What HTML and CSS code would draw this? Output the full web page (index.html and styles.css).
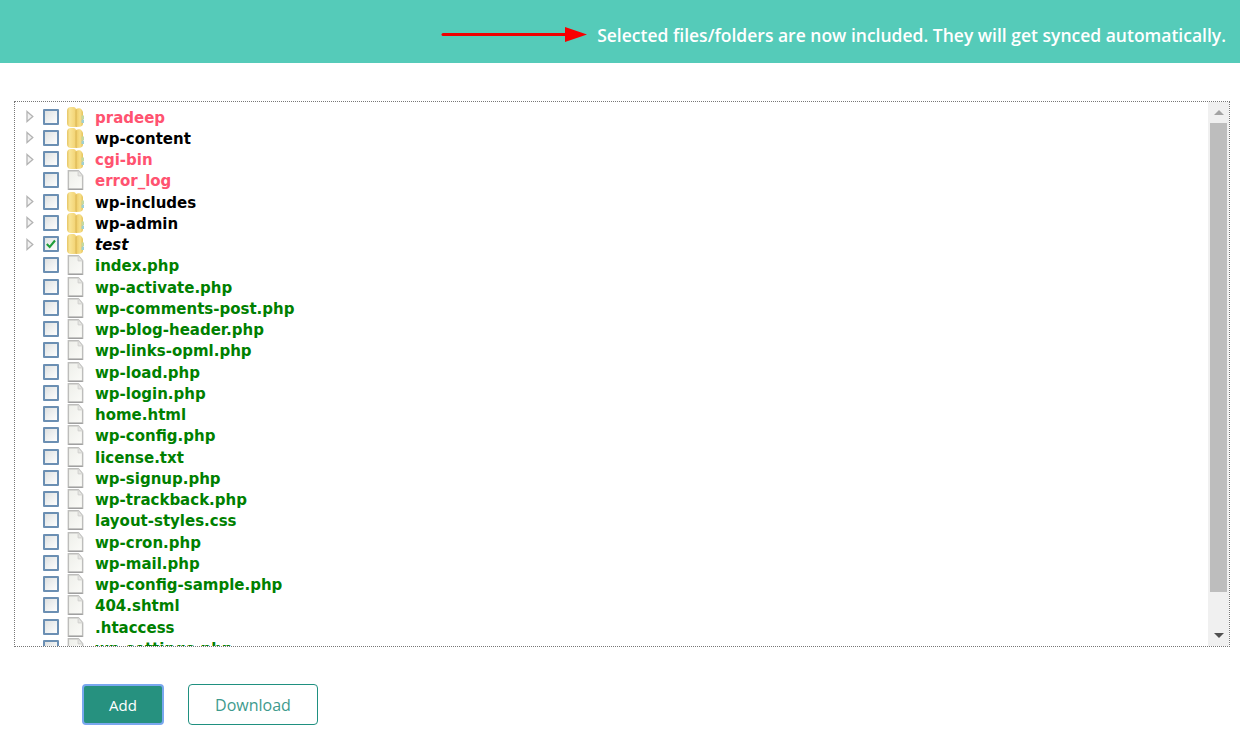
FILE: index.html
```html
<!DOCTYPE html>
<html lang="en">
<head>
<meta charset="utf-8">
<title>File tree</title>
<link rel="stylesheet" href="styles.css">
</head>
<body>
<svg class="defs" width="0" height="0" aria-hidden="true">
  <defs>
    <linearGradient id="foldL" x1="0" y1="0" x2="1" y2="0">
      <stop offset="0" stop-color="#e6c565"/>
      <stop offset="0.3" stop-color="#f9e596"/>
      <stop offset="1" stop-color="#f2d272"/>
    </linearGradient>
    <linearGradient id="foldR" x1="0" y1="0" x2="1" y2="0">
      <stop offset="0" stop-color="#eecb66"/>
      <stop offset="0.6" stop-color="#f7df88"/>
      <stop offset="1" stop-color="#e5c35a"/>
    </linearGradient>
    <linearGradient id="sheet" x1="0" y1="0" x2="1" y2="1">
      <stop offset="0" stop-color="#eeefea"/>
      <stop offset="1" stop-color="#fbfbf8"/>
    </linearGradient>
    <symbol id="folder" viewBox="0 0 17 20">
      <path d="M0 4C0 1.500 1.500 0 4 0h2.500C8 0 9 1 9 2.500V19c0 .7-.7 1-2 1H4c-2.500 0-4-1.500-4-4z" fill="url(#foldL)"/>
      <path d="M9 2c2-1 4.400-.8 5.500.4.900.9 1.500 2.100 1.500 3.200v11c0 1.800-1.200 3-2.800 3.200L9 20z" fill="url(#foldR)"/>
      <path d="M9 2.500V20" stroke="#d9b655" stroke-width="1"/>
      <rect x="14.500" y="8.500" width="2.500" height="3.500" fill="#c5d8a0"/>
      <rect x="14.500" y="12.500" width="2.500" height="3.500" fill="#9fd0d4"/>
    </symbol>
    <symbol id="file" viewBox="0 0 17 21">
      <path d="M1 .8H11.500L16 6v14.300H1z" fill="url(#sheet)" stroke="#bdbdbb" stroke-width="1.500"/>
      <path d="M11.200 .8V6.200H16" fill="#e6e6e3" stroke="#d0d0ce"/>
      <path d="M1 20.300h15" stroke="#a0a0a0" stroke-width="1.400"/>
    </symbol>
    <symbol id="arrow" viewBox="0 0 8 13">
      <path d="M1 1.500l5.800 5-5.800 5z" fill="#f2f2f2" stroke="#b3b3b3" stroke-width="1.300"/>
    </symbol>
  </defs>
</svg>

<header class="banner">
  <svg class="banner-arrow" width="148" height="18" viewBox="0 0 148 18" aria-hidden="true">
    <path d="M4 8.500H128" stroke="#f00000" stroke-width="3" stroke-linecap="round"/>
    <path d="M126 1L148 8.500L126 16z" fill="#f80000"/>
  </svg>
  <span class="banner-text">Selected files/folders are now included. They will get synced automatically.</span>
</header>

<main class="content">
  <section class="tree-box">
    <ul class="tree">
      <li class="row"><svg class="tog"><use href="#arrow"/></svg><span class="cb"></span><svg class="ic"><use href="#folder"/></svg><span class="name red">pradeep</span></li>
      <li class="row"><svg class="tog"><use href="#arrow"/></svg><span class="cb"></span><svg class="ic"><use href="#folder"/></svg><span class="name">wp-content</span></li>
      <li class="row"><svg class="tog"><use href="#arrow"/></svg><span class="cb"></span><svg class="ic"><use href="#folder"/></svg><span class="name red">cgi-bin</span></li>
      <li class="row"><span class="tog"></span><span class="cb"></span><svg class="ic"><use href="#file"/></svg><span class="name red">error_log</span></li>
      <li class="row"><svg class="tog"><use href="#arrow"/></svg><span class="cb"></span><svg class="ic"><use href="#folder"/></svg><span class="name">wp-includes</span></li>
      <li class="row"><svg class="tog"><use href="#arrow"/></svg><span class="cb"></span><svg class="ic"><use href="#folder"/></svg><span class="name">wp-admin</span></li>
      <li class="row"><svg class="tog"><use href="#arrow"/></svg><span class="cb"><svg width="12" height="12" viewBox="0 0 12 12"><path d="M1.800 6l2.900 2.900 5.300-6.400" fill="none" stroke="#1f9e3a" stroke-width="2.100"/></svg></span><svg class="ic"><use href="#folder"/></svg><span class="name sel">test</span></li>
      <li class="row"><span class="tog"></span><span class="cb"></span><svg class="ic"><use href="#file"/></svg><span class="name green">index.php</span></li>
      <li class="row"><span class="tog"></span><span class="cb"></span><svg class="ic"><use href="#file"/></svg><span class="name green">wp-activate.php</span></li>
      <li class="row"><span class="tog"></span><span class="cb"></span><svg class="ic"><use href="#file"/></svg><span class="name green">wp-comments-post.php</span></li>
      <li class="row"><span class="tog"></span><span class="cb"></span><svg class="ic"><use href="#file"/></svg><span class="name green">wp-blog-header.php</span></li>
      <li class="row"><span class="tog"></span><span class="cb"></span><svg class="ic"><use href="#file"/></svg><span class="name green">wp-links-opml.php</span></li>
      <li class="row"><span class="tog"></span><span class="cb"></span><svg class="ic"><use href="#file"/></svg><span class="name green">wp-load.php</span></li>
      <li class="row"><span class="tog"></span><span class="cb"></span><svg class="ic"><use href="#file"/></svg><span class="name green">wp-login.php</span></li>
      <li class="row"><span class="tog"></span><span class="cb"></span><svg class="ic"><use href="#file"/></svg><span class="name green">home.html</span></li>
      <li class="row"><span class="tog"></span><span class="cb"></span><svg class="ic"><use href="#file"/></svg><span class="name green">wp-config.php</span></li>
      <li class="row"><span class="tog"></span><span class="cb"></span><svg class="ic"><use href="#file"/></svg><span class="name green">license.txt</span></li>
      <li class="row"><span class="tog"></span><span class="cb"></span><svg class="ic"><use href="#file"/></svg><span class="name green">wp-signup.php</span></li>
      <li class="row"><span class="tog"></span><span class="cb"></span><svg class="ic"><use href="#file"/></svg><span class="name green">wp-trackback.php</span></li>
      <li class="row"><span class="tog"></span><span class="cb"></span><svg class="ic"><use href="#file"/></svg><span class="name green">layout-styles.css</span></li>
      <li class="row"><span class="tog"></span><span class="cb"></span><svg class="ic"><use href="#file"/></svg><span class="name green">wp-cron.php</span></li>
      <li class="row"><span class="tog"></span><span class="cb"></span><svg class="ic"><use href="#file"/></svg><span class="name green">wp-mail.php</span></li>
      <li class="row"><span class="tog"></span><span class="cb"></span><svg class="ic"><use href="#file"/></svg><span class="name green">wp-config-sample.php</span></li>
      <li class="row"><span class="tog"></span><span class="cb"></span><svg class="ic"><use href="#file"/></svg><span class="name green">404.shtml</span></li>
      <li class="row"><span class="tog"></span><span class="cb"></span><svg class="ic"><use href="#file"/></svg><span class="name green">.htaccess</span></li>
      <li class="row"><span class="tog"></span><span class="cb"></span><svg class="ic"><use href="#file"/></svg><span class="name green">wp-settings.php</span></li>
    </ul>
    <div class="scrollbar">
      <span class="sb-btn up"></span>
      <span class="sb-track"><span class="sb-thumb"></span></span>
      <span class="sb-btn down"></span>
    </div>
  </section>
  <div class="actions">
    <button class="btn primary" type="button">Add</button>
    <button class="btn ghost" type="button">Download</button>
  </div>
</main>
</body>
</html>
```

FILE: styles.css
```css
* { box-sizing: border-box; }
html, body { margin: 0; padding: 0; background: #fff; overflow: hidden; }
body { width: 1240px; height: 744px; font-family: "Open Sans", sans-serif; }
.defs { position: absolute; }

.banner {
  height: 63px;
  background: #55cbb9;
  display: flex;
  align-items: center;
  justify-content: flex-end;
  padding: 15px 14px 8px 0;
  gap: 10px;
}
.banner-text { color: #fff; font-size: 17.500px; font-weight: 600; white-space: nowrap; }

.content { padding: 38px 10px 0 14px; }

.tree-box {
  height: 546px;
  border: 1px dotted #777;
  display: flex;
  overflow: hidden;
}
.tree {
  list-style: none;
  margin: 0;
  padding: 4px 0 0 0;
  flex: 1;
  height: 100%;
  overflow: hidden;
}
.row { height: 21.250px; display: flex; align-items: center; }
.tog { width: 8px; height: 13px; margin-left: 11px; flex: none; }
.cb {
  width: 16px; height: 16px; margin-left: 9px; flex: none;
  border: 2px solid #6b8fb3;
  border-radius: 1px;
  background: linear-gradient(135deg, #dfe1e1 0%, #eef0f0 50%, #fdfdfd 100%);
  display: flex; align-items: center; justify-content: center;
}
.ic { width: 17px; height: 20px; margin-left: 8px; flex: none; }
.name {
  margin-left: 10px;
  padding: 2px 0 0 1px;
  font-family: "DejaVu Sans", sans-serif;
  font-weight: 700;
  font-size: 15px;
  color: #000;
  white-space: nowrap;
}
.red { color: #ff5370; }
.green { color: #008000; }
.sel { font-style: italic; }

.scrollbar { width: 21px; flex: none; background: #f0f0f0; display: flex; flex-direction: column; }
.sb-btn { height: 21px; flex: none; display: flex; align-items: center; justify-content: center; }
.down { height: 22px; }
.sb-btn::before { content: ""; width: 0; height: 0; border-left: 5px solid transparent; border-right: 5px solid transparent; }
.up::before { border-bottom: 5px solid #a3a3a3; }
.down::before { border-top: 5px solid #505050; }
.sb-track { flex: 1; display: block; }
.sb-thumb { display: block; width: 17px; margin-left: 2px; height: 469px; background: #bdbdbd; }

.actions { display: flex; gap: 24px; padding: 37px 0 0 68px; }
.btn {
  height: 41px;
  border-radius: 4px;
  font-family: "Open Sans", sans-serif;
  font-size: 16px;
}
.primary { width: 82px; background: #26917f; border: 2px solid #7aa7ef; color: #fff; font-size: 15px; }
.ghost { width: 130px; background: #fff; border: 1px solid #1f9080; color: #3e9a8d; }
```
